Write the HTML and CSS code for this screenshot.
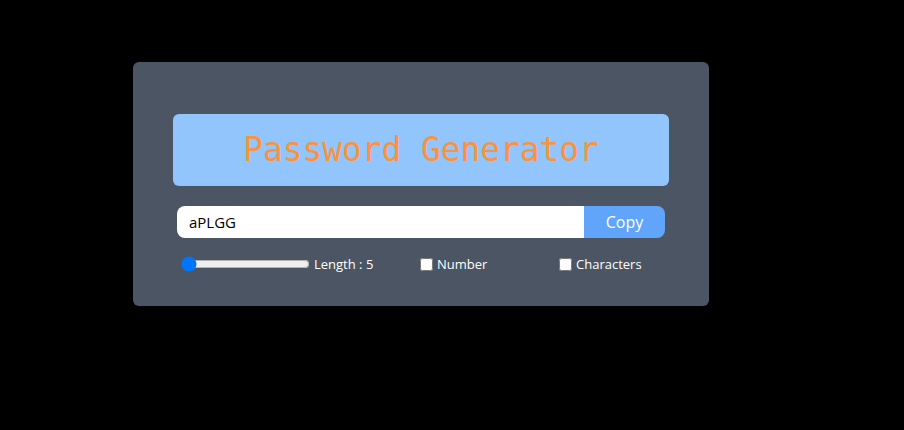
FILE: index.html
```html
<!DOCTYPE html>
<html>
<head>
<meta charset="utf-8">
<link rel="stylesheet" href="styles.css">
</head>
<body>
<div class="card">
  <h1 class="title">Password Generator</h1>
  <div class="field">
    <input class="pw" type="text" value="aPLGG" readonly>
    <button class="copy">Copy</button>
  </div>
  <div class="controls">
    <div class="group g-length">
      <input class="range" type="range" min="5" max="100" value="5">
      <label>Length : 5</label>
    </div>
    <div class="group g-number">
      <input type="checkbox" id="num">
      <label for="num">Number</label>
    </div>
    <div class="group g-chars">
      <input type="checkbox" id="chr">
      <label for="chr">Characters</label>
    </div>
  </div>
</div>
</body>
</html>
```

FILE: styles.css
```css
html, body {
  margin: 0;
  background: #000;
  height: 100%;
}
body {
  font-family: "Open Sans", "Noto Sans", sans-serif;
}
.card {
  width: 576px;
  box-sizing: border-box;
  margin: 62px 0 0 133px;
  background: #4b5563;
  border-radius: 6px;
  padding: 52px 40px 0;
  height: 244px;
}
.title {
  margin: 0;
  height: 72px;
  background: #93c5fd;
  border-radius: 6px;
  color: #fb923c;
  font-family: "DejaVu Sans Mono", "Liberation Mono", monospace;
  font-weight: normal;
  font-size: 32.8px;
  line-height: 72px;
  text-align: center;
}
.field {
  display: flex;
  margin: 20px 4px 0;
  height: 32px;
  border-radius: 8px;
  overflow: hidden;
}
.pw {
  flex: 1;
  border: 0;
  outline: none;
  padding: 0 12px;
  font-family: "Open Sans", sans-serif;
  font-size: 15px;
  color: #000;
  background: #fff;
  min-width: 0;
}
.copy {
  width: 81px;
  border: 0;
  background: #60a5fa;
  color: #fff;
  font-family: "Open Sans", sans-serif;
  font-size: 16px;
  padding: 0;
}
.controls {
  display: flex;
  align-items: center;
  margin: 16px 0 0 6px;
  color: #fff;
  font-size: 13px;
}
.group {
  display: flex;
  align-items: center;
}
.g-length { width: 237px; }
.g-number { width: 139px; }
.range {
  width: 129px;
  margin: 2px 4px 2px 2px;
}
input[type="checkbox"] {
  width: 13px;
  height: 13px;
  margin: 3px 4px 3px 4px;
}
label { white-space: nowrap; }
```
